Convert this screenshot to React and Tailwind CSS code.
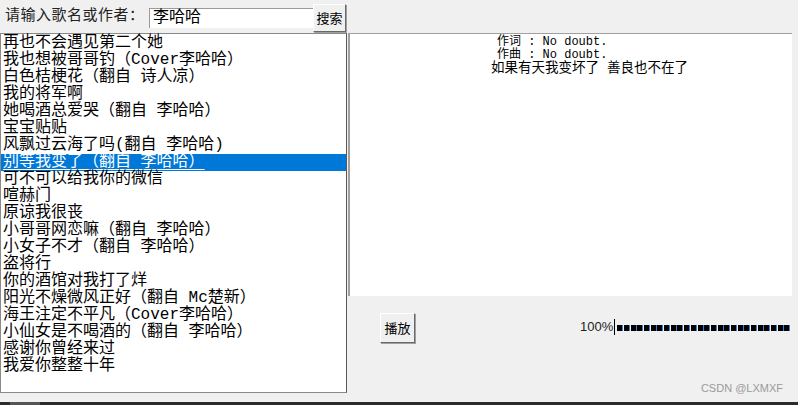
const songs = [
  '再也不会遇见第二个她',
  '我也想被哥哥钓（Cover李哈哈）',
  '白色桔梗花（翻自 诗人凉）',
  '我的将军啊',
  '她喝酒总爱哭（翻自 李哈哈）',
  '宝宝贴贴',
  '风飘过云海了吗(翻自 李哈哈)',
  '别等我变了（翻自 李哈哈）',
  '可不可以给我你的微信',
  '喧赫门',
  '原谅我很丧',
  '小哥哥网恋嘛（翻自 李哈哈）',
  '小女子不才（翻自 李哈哈）',
  '盗将行',
  '你的酒馆对我打了烊',
  '阳光不燥微风正好（翻自 Mc楚新）',
  '海王注定不平凡（Cover李哈哈）',
  '小仙女是不喝酒的（翻自 李哈哈）',
  '感谢你曾经来过',
  '我爱你整整十年',
];

const selected = 7;
const cjk = { fontFamily: '"Liberation Mono", "Noto Sans CJK SC", monospace' };
const ui = { fontFamily: '"Noto Sans CJK SC", "Noto Sans", sans-serif' };

export default function App() {
  return (
    <div className="flex h-[405px] w-[798px] flex-col overflow-hidden bg-[#f0f0f0] text-black">
      {/* search bar */}
      <div className="flex h-[33px] items-start">
        <span className="mt-[7px] ml-[5px] w-[144px] text-[15px] leading-[20px] tracking-[0.5px] text-[#222]" style={cjk}>
          请输入歌名或作者：
        </span>
        <div
          className="mt-[8px] h-[20px] w-[164px] border-t border-l border-[#9a9a9a] bg-white pl-[3px] text-[16px] leading-[18px]"
          style={cjk}
        >
          李哈哈
        </div>
        <button
          className="mt-[4px] flex h-[28px] w-[33px] items-center justify-center border border-t-white border-l-white border-r-[#696969] border-b-[#696969] bg-[#f0f0f0] text-[13px] shadow-[1px_1px_0_#a0a0a0]"
          style={ui}
        >
          搜索
        </button>
      </div>

      <div className="flex flex-1">
        {/* song list */}
        <div className="flex w-[347px] flex-col">
          <div className="h-[360px] border border-[#8a8a8a] border-r-[#5a5a5a] bg-white pt-[1px]">
            {songs.map((s, i) => (
              <div
                key={s}
                className={
                  'h-[17px] whitespace-pre pl-[2px] text-[16px] leading-[17px] ' +
                  (i === selected ? 'bg-[#0078d7] text-white underline decoration-white underline-offset-[3px]' : '')
                }
                style={cjk}
              >
                {s}
              </div>
            ))}
          </div>
        </div>

        {/* lyrics + controls */}
        <div className="ml-[1px] flex flex-1 flex-col">
          <div className="h-[263px] w-[444px] border-t border-l-2 border-[#a0a0a0] bg-white pt-[2px]" style={cjk}>
            <div className="whitespace-pre pl-[147px] text-[12px] leading-[13px]">作词 : No doubt.</div>
            <div className="whitespace-pre pl-[147px] text-[12px] leading-[13px]">作曲 : No doubt.</div>
            <div className="whitespace-pre pl-[141px] text-[13.5px] leading-[14px]">如果有天我变坏了 善良也不在了</div>
          </div>

          <div className="flex items-start pt-[17px] pl-[32px]">
            <button
              className="flex h-[30px] w-[35px] items-center justify-center border border-t-white border-l-white border-r-[#696969] border-b-[#696969] bg-[#f0f0f0] text-[13px] shadow-[1px_1px_0_#a0a0a0]"
              style={ui}
            >
              播放
            </button>
            <div className="ml-[165px] mt-[6px] flex items-center">
              <span className="text-[13px] leading-[16px] text-[#222]" style={{ fontFamily: '"Liberation Sans", Arial, sans-serif' }}>
                100%
              </span>
              <span className="ml-[1px] h-[16px] w-[1px] bg-black" />
              <div className="ml-[2px] mt-[1px] flex gap-[1.7px]">
                {Array.from({ length: 26 }).map((_, i) => (
                  <span key={i} className="h-[6px] w-[5px] bg-black shadow-[1px_0_0_#3a7fd0]" />
                ))}
              </div>
            </div>
          </div>

          <div className="mt-auto mb-[6px] pr-[15px] text-right text-[11px] text-[#9a9a9a]" style={{ fontFamily: '"Liberation Sans", Arial, sans-serif' }}>
            CSDN @LXMXF
          </div>
        </div>
      </div>

      <div className="flex h-[3px] bg-[#2b2b2b]">
        <span className="ml-[10px] w-[30px] bg-[#555]" />
      </div>
    </div>
  );
}
